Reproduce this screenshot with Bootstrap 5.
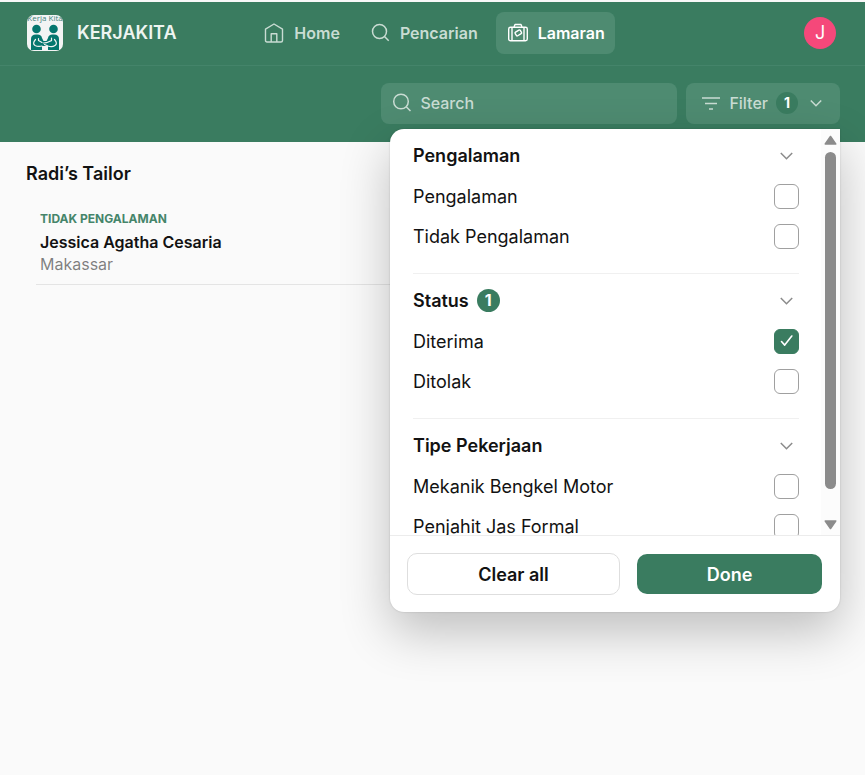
<!DOCTYPE html>
<html lang="id">
<head>
<meta charset="utf-8">
<meta name="viewport" content="width=device-width, initial-scale=1">
<title>KERJAKITA – Lamaran</title>
<link href="https://cdn.jsdelivr.net/npm/bootstrap@5.3.0/dist/css/bootstrap.min.css" rel="stylesheet">
<style>
:root { --kk-green: #3a7c60; --kk-tile: #4e8b71; --kk-soft: #c9dcd3; }
body { font-family: Inter, "Liberation Sans", sans-serif; background: #fafafa; color: #121212; font-size: 16px; line-height: 24px; min-height: 100vh; }
.site-head { background: var(--kk-green); border-top: 2px solid #f8f8f8; }
.top-bar { padding: 10px 25px 11px 27px; border-bottom: 1px solid #44846a; }
.side { flex: 1 1 0; }
.brand { gap: 14px; font-size: 18px; font-weight: 600; color: #eef5f1; }
.brand:hover { color: #fff; }
.main-nav { gap: 8px; }
.main-nav .nav-link { display: flex; align-items: center; gap: 10px; height: 42px; padding: 0 10px 0 12px; border-radius: 8px; font-weight: 600; color: var(--kk-soft); }
.main-nav .nav-link.active { background: var(--kk-tile); color: #fff; }
.avatar { width: 32px; height: 32px; background: #f5487a; font-size: 18px; }
.tool-bar { padding: 17px 25px 18px; gap: 9px; }
.tile { background: var(--kk-tile); border-radius: 8px; color: var(--kk-soft); height: 41px; }
.search-box { flex: 0 1 296px; padding: 0 11px 2px; gap: 8px; }
.search-box input, .search-box input:focus { background: transparent; color: #fff; font-weight: 500; padding: 0; border: 0; box-shadow: none; }
.search-box input::placeholder { color: var(--kk-soft); opacity: 1; }
.filter-btn { border: 0; padding: 0 18px 2px 15px; font-weight: 500; gap: 8px; }
.count { width: 22px; height: 22px; border-radius: 50%; background: var(--kk-green); color: #fff; font-size: 14px; font-weight: 700; line-height: 22px; text-align: center; }
.count-lg { width: 23px; height: 23px; font-size: 16px; }
.panel { top: calc(100% + 5px); right: 0; width: 450px; max-width: calc(100vw - 50px); z-index: 10; border-radius: 14px 0 14px 14px; background: #fff; box-shadow: 0 0 2px rgba(0,0,0,.18), 0 20px 50px rgba(0,0,0,.24); font-size: 18px; color: #121212; }
.panel-body { height: 406px; overflow: hidden; }
.groups { padding: 0 22px 0 23px; }
.group { padding: 6px 0 17px; border: 0; border-bottom: 1px solid #f0f0f0; }
.group-head { height: 41px; border: 0; background: none; padding: 0 6px 0 0; font-weight: 600; gap: 8px; color: inherit; }
.opt { height: 40px; padding-top: 2px; }
.opt .form-check-input { width: 25px; height: 25px; margin: 0 0 2px; border: 1px solid #a0a0a0; border-radius: 6px; }
.opt .form-check-input:checked { background-color: var(--kk-green); border-color: var(--kk-green); background-size: 20px;
  background-image: url("data:image/svg+xml,%3Csvg xmlns='http://www.w3.org/2000/svg' viewBox='0 0 20 20'%3E%3Cpath fill='none' stroke='%23fff' stroke-width='1.6' stroke-linecap='round' stroke-linejoin='round' d='M4.500 10.500l3.200 3.600L14.800 5'/%3E%3C/svg%3E"); }
.scroll-track { width: 19px; background: #fcfcfc; padding: 6px 0 4px; gap: 6px; }
.scroll-thumb { width: 11px; height: 337px; border-radius: 6px; background: #8b8b8b; }
.panel-foot { padding: 17px 18px 17px 17px; gap: 17px; border-top: 1px solid #ececec; }
.panel-foot .btn { height: 42px; padding: 0; font-size: 18px; font-weight: 600; border-radius: 10px; color: #121212; }
.panel-foot .btn-clear { flex: 211 1 0; border: 1px solid #dedede; background: #fff; }
.panel-foot .btn-done { flex: 185 1 0; height: 40px; background: var(--kk-green); color: #fff; border: 0; }
.content { padding: 18px 26px; }
.content h1 { font-size: 18px; line-height: 27px; font-weight: 600; margin: 0 0 20px; }
.person { margin-left: 10px; padding: 0 4px 9px; border-bottom: 1px solid #e4e4e4; line-height: 22px; }
.tag { font-size: 12px; line-height: 24px; font-weight: 700; color: #45856a; }
</style>
</head>
<body>
<header class="site-head">
  <div class="top-bar d-flex align-items-center">
    <div class="side d-flex">
      <a href="#" class="brand d-flex align-items-center text-decoration-none">
        <svg width="36" height="36" viewBox="0 0 36 36" aria-hidden="true">
          <defs><clipPath id="logo-clip"><rect width="36" height="36" rx="7"/></clipPath></defs>
          <g clip-path="url(#logo-clip)">
            <rect width="36" height="36" fill="#f3f4f4"/>
            <text x="18" y="6" text-anchor="middle" font-family="Open Sans, sans-serif" font-size="8" font-weight="500" fill="#42827c">Kerja Kita</text>
            <g fill="#04766e"><circle cx="9.500" cy="14" r="4.300"/><circle cx="26.500" cy="14" r="4.300"/>
            <path d="M4 35V24q0-4.500 5-4.500h1.500q4 0 4.500 3.500l1.500 3h3l1.500-3q.500-3.500 4.500-3.500h1.500q5 0 5 4.500v11H21v-4h-6v4z"/></g>
            <path d="M8.500 24.500q-3.500 4-.500 6 3 1.500 7 .500M27.500 24.500q3.500 4 .500 6-3 2-7 .500l-3.500-1.500M11.500 23.500v2l3.500 2M24.500 23v2.500l-5 2.200-3 .300" fill="none" stroke="#f3f4f4" stroke-width="1.200" stroke-linecap="round"/>
          </g>
        </svg>
        <span>KERJAKITA</span>
      </a>
    </div>
    <nav class="main-nav nav flex-nowrap">
      <a class="nav-link" href="#">
        <svg width="20" height="20" viewBox="0 0 20 20" fill="none" stroke="currentColor" stroke-width="1.400" stroke-linejoin="round" aria-hidden="true"><path d="M1.500 6.200L10 1l8.500 5.200v11.300q0 1.500-1.500 1.500H3q-1.500 0-1.500-1.500zM7.200 19v-8.300h5.600V19"/></svg>
        Home</a>
      <a class="nav-link" href="#">
        <svg width="20" height="20" viewBox="0 0 20 20" fill="none" stroke="currentColor" stroke-width="1.500" aria-hidden="true"><circle cx="9.500" cy="8.500" r="7"/><path d="M14.500 13.500l4.200 4.200"/></svg>
        Pencarian</a>
      <a class="nav-link active" href="#" aria-current="page">
        <svg width="20" height="20" viewBox="0 0 20 20" fill="none" stroke="currentColor" stroke-width="1.400" stroke-linejoin="round" aria-hidden="true"><rect x=".7" y="4.200" width="18.600" height="13.600" rx="1.800"/><path d="M4 4.200v13.600M16 4.200v13.600M6 4l1-2.500h6L14 4"/><rect x="7.400" y="7.800" width="6" height="4.200" rx="1" transform="rotate(-32 10.400 10)"/></svg>
        Lamaran</a>
    </nav>
    <div class="side d-flex justify-content-end">
      <a href="#" class="avatar me-1 rounded-circle d-flex align-items-center justify-content-center text-white text-decoration-none">J</a>
    </div>
  </div>
  <div class="tool-bar d-flex justify-content-end">
    <label class="tile search-box d-flex align-items-center">
      <svg class="flex-shrink-0" width="20" height="20" viewBox="0 0 20 20" fill="none" stroke="currentColor" stroke-width="1.500" aria-hidden="true"><circle cx="9" cy="8.500" r="7.300"/><path d="M14.200 13.700l4.300 4.300"/></svg>
      <input class="form-control" type="search" placeholder="Search" aria-label="Search">
    </label>
    <div class="position-relative">
      <button type="button" class="tile filter-btn d-flex align-items-center" aria-expanded="true">
        <svg width="20" height="20" viewBox="0 0 20 20" fill="none" stroke="currentColor" stroke-width="1.500" aria-hidden="true"><path d="M1 5h18M4 10.500h12M8 16h4"/></svg>
        <span>Filter</span>
        <span class="count">1</span>
        <svg class="ms-1" width="12" height="12" viewBox="0 0 12 12" fill="none" stroke="currentColor" stroke-width="1.500" aria-hidden="true"><path d="M.8 3.500L6 8.800 11.200 3.500"/></svg>
      </button>
      <div class="panel position-absolute">
        <div class="panel-body d-flex">
          <form class="groups flex-grow-1">
            <section class="group">
              <button type="button" class="group-head d-flex align-items-center w-100"><span>Pengalaman</span><svg class="ms-auto" width="13" height="12" viewBox="0 0 13 12" fill="none" stroke="#8b8b8b" stroke-width="1.500" aria-hidden="true"><path d="M.8 3l5.700 5.800L12.200 3"/></svg></button>
              <label class="opt d-flex align-items-center justify-content-between">Pengalaman<input class="form-check-input" type="checkbox"></label>
              <label class="opt d-flex align-items-center justify-content-between">Tidak Pengalaman<input class="form-check-input" type="checkbox"></label>
            </section>
            <section class="group">
              <button type="button" class="group-head d-flex align-items-center w-100"><span>Status</span><span class="count count-lg">1</span><svg class="ms-auto" width="13" height="12" viewBox="0 0 13 12" fill="none" stroke="#8b8b8b" stroke-width="1.500" aria-hidden="true"><path d="M.8 3l5.700 5.800L12.200 3"/></svg></button>
              <label class="opt d-flex align-items-center justify-content-between">Diterima<input class="form-check-input" type="checkbox" checked></label>
              <label class="opt d-flex align-items-center justify-content-between">Ditolak<input class="form-check-input" type="checkbox"></label>
            </section>
            <section class="group">
              <button type="button" class="group-head d-flex align-items-center w-100"><span>Tipe Pekerjaan</span><svg class="ms-auto" width="13" height="12" viewBox="0 0 13 12" fill="none" stroke="#8b8b8b" stroke-width="1.500" aria-hidden="true"><path d="M.8 3l5.700 5.800L12.200 3"/></svg></button>
              <label class="opt d-flex align-items-center justify-content-between">Mekanik Bengkel Motor<input class="form-check-input" type="checkbox"></label>
              <label class="opt d-flex align-items-center justify-content-between">Penjahit Jas Formal<input class="form-check-input" type="checkbox"></label>
            </section>
          </form>
          <div class="scroll-track d-flex flex-column align-items-center flex-shrink-0" aria-hidden="true">
            <svg width="13" height="11" viewBox="0 0 13 11"><path d="M6.500 1.500L11.700 9H1.300z" fill="#8b8b8b" stroke="#8b8b8b" stroke-width="1.600" stroke-linejoin="round"/></svg>
            <div class="scroll-thumb"></div>
            <svg class="mt-auto" width="13" height="11" viewBox="0 0 13 11"><path d="M6.500 8.500L11.700 1H1.300z" fill="#8b8b8b" stroke="#8b8b8b" stroke-width="1.600" stroke-linejoin="round"/></svg>
          </div>
        </div>
        <div class="panel-foot d-flex align-items-center">
          <button type="button" class="btn btn-clear">Clear all</button>
          <button type="button" class="btn btn-done">Done</button>
        </div>
      </div>
    </div>
  </div>
</header>
<main class="content">
  <h1>Radi’s Tailor</h1>
  <article class="person">
    <div class="tag">TIDAK PENGALAMAN</div>
    <div class="fw-semibold">Jessica Agatha Cesaria</div>
    <div class="text-black-50">Makassar</div>
  </article>
</main>
<script src="https://cdn.jsdelivr.net/npm/bootstrap@5.3.0/dist/js/bootstrap.bundle.min.js"></script>
</body>
</html>
